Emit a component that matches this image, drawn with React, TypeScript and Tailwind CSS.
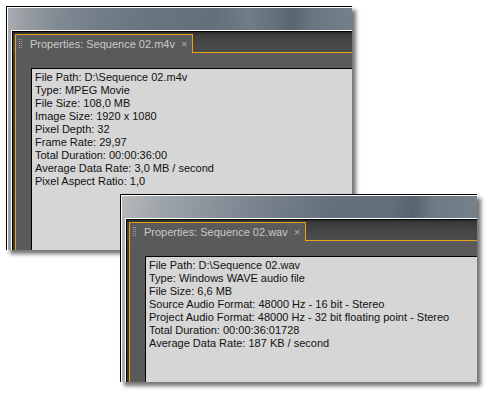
import React from "react";

const ORANGE = "border-[#e9a21c]";

function Grip() {
  return (
    <svg width="3" height="10" viewBox="0 0 3 10" className="shrink-0">
      {[0, 2, 4, 6, 8].map((y) => (
        <g key={y}>
          <rect x="0" y={y} width="1" height="1" fill="#a0a0a0" />
          <rect x="2" y={y} width="1" height="1" fill="#a0a0a0" />
        </g>
      ))}
    </svg>
  );
}

function Window({
  pos,
  strip,
  title,
  lines,
}: {
  pos: string;
  strip: string;
  title: string;
  lines: string[];
}) {
  return (
    <div className={`${pos} bg-black pt-px pl-px shadow-[4px_4px_4px_rgba(0,0,0,0.55)]`}>
      <div className="h-full w-full bg-white pt-px pl-px">
        <div className={`h-full w-full flex flex-col pl-[3px] pt-[22px] ${strip}`}>
          <div className="flex-1 min-h-0 flex flex-col border-t border-l border-white">
            <div className="flex-1 min-h-0 flex flex-col border-t border-l border-black bg-[#3a3a3a] pl-[2px]">
              <div className="flex items-end h-[21px] shrink-0 -ml-[2px] pl-[2px] bg-[linear-gradient(180deg,#2a2a2a_0%,#3c3c3c_15%,#474747_60%,#4c4c4c_100%)]">
                <div className={`h-[19px] border-t border-l border-r ${ORANGE} bg-[#5a5a5a] flex items-center pl-[3px] pr-[5px]`}>
                  <Grip />
                  <span className="ml-[8px] text-[11px] leading-[13px] text-[#c9c9c9] whitespace-nowrap">
                    {title}
                  </span>
                  <span className="ml-[6px] text-[11px] leading-[11px] text-[#b0b0b0]">×</span>
                </div>
                <div className={`flex-1 h-full border-b ${ORANGE}`} />
              </div>
              <div className={`flex-1 min-h-0 flex border-l ${ORANGE} bg-[#5a5a5a] pl-[15px] pt-[15px]`}>
                <div className="flex-1 border-t border-l border-black bg-[#d6d6d6] pl-[3px] pt-[2px] text-[11px] leading-[13px] text-[#111111] whitespace-nowrap overflow-hidden">
                  {lines.map((l) => (
                    <div key={l}>{l}</div>
                  ))}
                </div>
              </div>
            </div>
          </div>
        </div>
      </div>
    </div>
  );
}

export default function App() {
  return (
    <div className="relative w-[487px] h-[395px] bg-white overflow-hidden font-['Liberation_Sans',Arial,sans-serif]">
      <Window
        pos="absolute left-[6px] top-[6px] w-[346px] h-[244px]"
        strip="bg-[linear-gradient(180deg,rgba(255,255,255,0.06),rgba(0,0,0,0.04)),linear-gradient(90deg,#a3a8ac_0%,#8e959b_6%,#7b858e_14%,#6b7782_25%,#606d79_40%,#5a6773_60%,#687580_70%,#5b6773_78%,#505c68_83%,#606d79_88%,#6c7884_100%)]"
        title="Properties: Sequence 02.m4v"
        lines={[
          "File Path: D:\\Sequence 02.m4v",
          "Type: MPEG Movie",
          "File Size: 108,0 MB",
          "Image Size: 1920 x 1080",
          "Pixel Depth: 32",
          "Frame Rate: 29,97",
          "Total Duration: 00:00:36:00",
          "Average Data Rate: 3,0 MB / second",
          "Pixel Aspect Ratio: 1,0",
        ]}
      />
      <Window
        pos="absolute left-[120px] top-[194px] w-[357px] h-[188px]"
        strip="bg-[linear-gradient(180deg,rgba(255,255,255,0.06),rgba(0,0,0,0.04)),linear-gradient(90deg,#b2b5b7_0%,#9aa1a6_10%,#88919a_22%,#75808a_35%,#66727e_48%,#5b6874_60%,#5a6773_75%,#4f5b67_82%,#66737e_88%,#6d7985_100%)]"
        title="Properties: Sequence 02.wav"
        lines={[
          "File Path: D:\\Sequence 02.wav",
          "Type: Windows WAVE audio file",
          "File Size: 6,6 MB",
          "Source Audio Format: 48000 Hz - 16 bit - Stereo",
          "Project Audio Format: 48000 Hz - 32 bit floating point - Stereo",
          "Total Duration: 00:00:36:01728",
          "Average Data Rate: 187 KB / second",
        ]}
      />
    </div>
  );
}
